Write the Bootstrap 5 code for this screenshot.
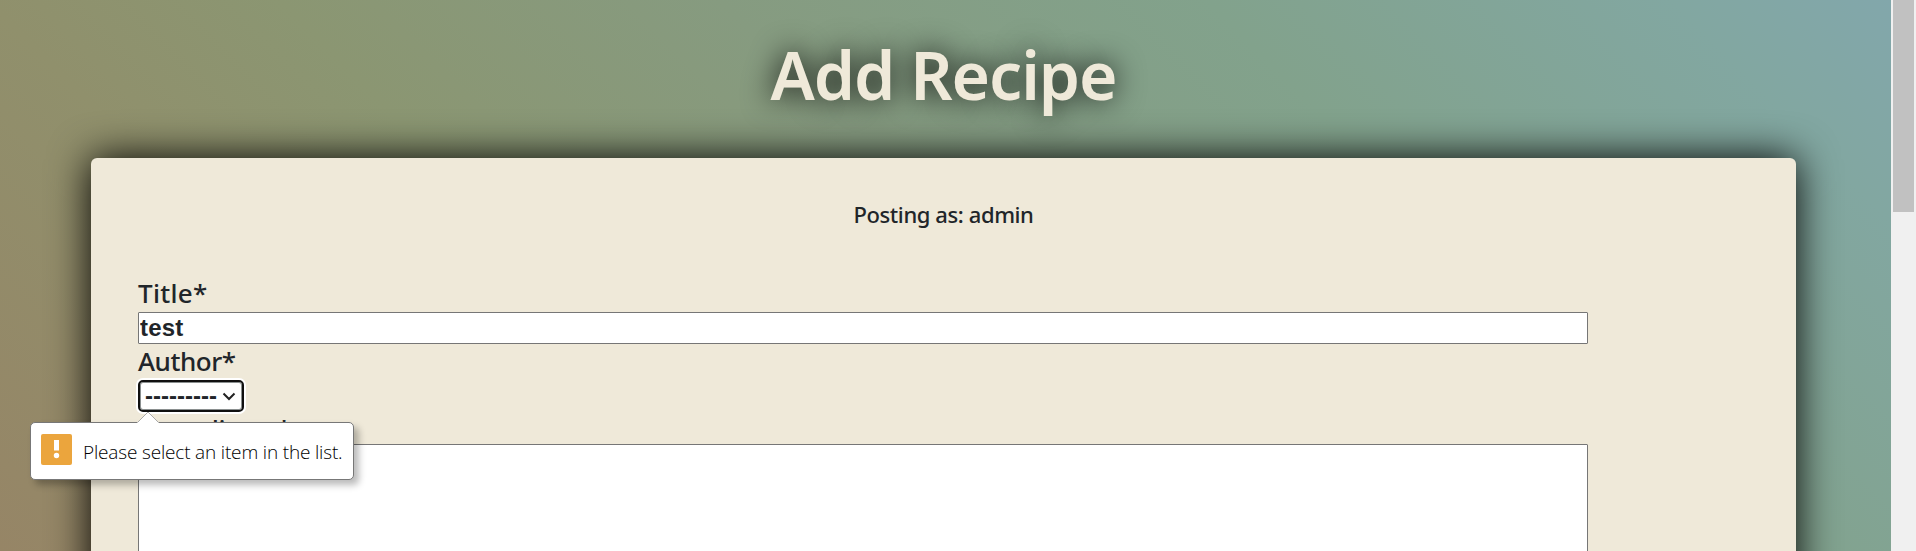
<!DOCTYPE html>
<html lang="en">
<head>
<meta charset="utf-8">
<meta name="viewport" content="width=device-width, initial-scale=1">
<title>Add Recipe</title>
<link rel="stylesheet" href="https://cdn.jsdelivr.net/npm/bootstrap@5.3.0/dist/css/bootstrap.min.css">
<style>
  body { font-family: "Noto Sans", "Open Sans", sans-serif; color: #212529; font-weight: 500; }
  .backdrop { background: linear-gradient(45deg, #968566 0%, #90906c 22%, #8b9672 34%, #869b80 52%, #82a28c 72%, #82a7a1 91%, #82a7ab 100%); }
  .page-title { color: #efe9d9; font-size: 66px; font-weight: 600; line-height: 80px; margin: 34px 0 44px; padding-right: 4px; letter-spacing: -1.1px; text-shadow: 0 0 30px #000; }
  .sheet { background: #efe9d9; border-radius: 6px; margin: 0 95px 0 91px; height: 700px; padding: 41px 47px; box-shadow: 0 0 40px #000; }
  .posting { font-size: 22px; line-height: 30px; margin-bottom: 47px; letter-spacing: -.4px; }
  .field-name { font-size: 26px; line-height: 34px; height: 36px; letter-spacing: -.45px; white-space: nowrap; }
  .field-name.airy { letter-spacing: .3px; }
  .field-name.tight { line-height: 32px; height: 31px; }
  .field { display: block; width: 1450px; border: 1px solid #767676; border-radius: 1px; background: #fff; color: #212529; font: 700 24px/28px "Liberation Sans", sans-serif; letter-spacing: .2px; padding: 1px; height: 32px; outline: 0; }
  .picker { width: 106px; height: 32px; margin-bottom: 1px; border: 2px solid #101010; border-radius: 5px; box-shadow: 0 0 0 2px #fff, inset 0 0 0 1px #8a8f8f; background: #fff; font: 700 24px/26px "Liberation Sans", sans-serif; padding: 0 6px 0 5px; }
  .bubble { left: 30px; top: 422px; width: 324px; height: 58px; background: #fff; border: 1px solid #777; border-radius: 5px; box-shadow: 5px 5px 7px rgba(0,0,0,.27); padding: 0 0 3px 10px; gap: 11px; font: 300 19px/24px "Open Sans", sans-serif; letter-spacing: -.17px; color: #000; white-space: nowrap; }
  .bubble .pointer { left: 106px; top: -12px; }
  .scroll-track { width: 25px; background: #f0f0f0; padding: 0 2px; }
  .scroll-thumb { height: 212px; background: #c1c1c1; }
</style>
</head>
<body class="vh-100 overflow-hidden">
<div class="d-flex vh-100 overflow-hidden position-relative">
  <main class="backdrop flex-grow-1 vh-100 overflow-hidden">
    <h1 class="page-title text-center">Add Recipe</h1>
    <section class="sheet">
      <p class="posting text-center">Posting as: admin</p>
      <form>
        <label class="field-name airy d-block" for="title">Title*</label>
        <input class="field" id="title" value="test">
        <label class="field-name d-block" for="author">Author*</label>
        <div class="picker d-flex align-items-center justify-content-between" id="author">
          <span>---------</span>
          <svg width="14" height="9" viewBox="0 0 14 9" fill="none" stroke="#222" stroke-width="2"><path d="M1.5 1.5 7 7l5.500-5.500"/></svg>
        </div>
        <label class="field-name tight d-block" for="ingredients">Ingredients*</label>
        <textarea class="field" id="ingredients" style="height:260px"></textarea>
      </form>
    </section>
  </main>
  <div class="scroll-track flex-shrink-0"><div class="scroll-thumb"></div></div>
  <div class="bubble position-absolute d-flex align-items-center">
    <svg class="pointer position-absolute" width="22" height="13" viewBox="0 0 22 13"><path d="M0 13V12L11 1l11 11v1z" fill="#fff"/><path d="M1 11 11 1l10 10" fill="none" stroke="#aaa"/></svg>
    <svg width="31" height="31" viewBox="0 0 31 31"><rect width="31" height="31" rx="2" fill="#eba53d"/><path d="M13 6h5v10.500h-5z" fill="#fff"/><circle cx="15.500" cy="21.500" r="2.700" fill="#fff"/></svg>
    <span class="pt-1">Please select an item in the list.</span>
  </div>
</div>
<script src="https://cdn.jsdelivr.net/npm/bootstrap@5.3.0/dist/js/bootstrap.bundle.min.js"></script>
</body>
</html>
